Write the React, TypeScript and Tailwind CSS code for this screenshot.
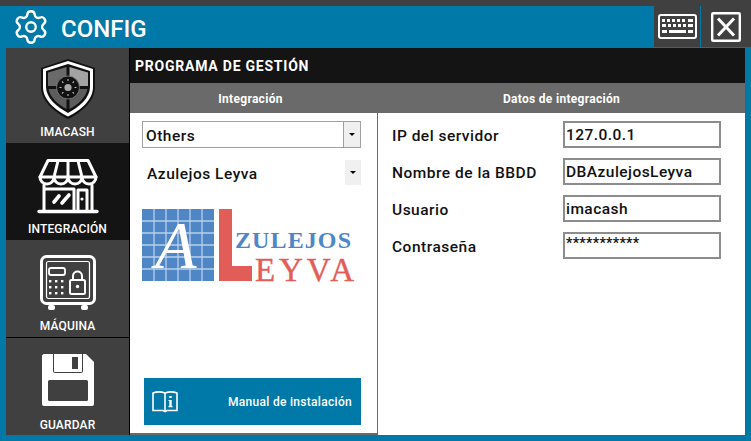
import { Settings } from "lucide-react";
import type { ReactNode } from "react";

const FONT = "font-['Roboto','Noto_Sans',sans-serif]";

function ShieldIcon() {
  return (
    <svg width="56" height="60" viewBox="0 0 56 60">
      <path d="M28 0 L55 9 L55 28 C55 42 42 53 28 60 C14 53 1 42 1 28 L1 9 Z" fill="#111" />
      <path d="M28 2 L53 10 L53 28 C53 41 41 51 28 57.5 C15 51 3 41 3 28 L3 10 Z" fill="#fff" />
      <path d="M28 5 L50 12 L50 28 C50 39 39 48 28 54 C17 48 6 39 6 28 L6 12 Z" fill="#111" />
      <path d="M26.5 8 L26.5 27 L8 27 L8 13.5 Z" fill="#6a6a6a" />
      <path d="M29.5 8 L48 13.5 L48 27 L29.5 27 Z" fill="#a3a3a3" />
      <path d="M8.5 30 L26.5 30 L26.5 50 C18 46 10 38 8.5 30 Z" fill="#5c5c5c" />
      <path d="M29.5 30 L47.5 30 C46 38 38 46 29.5 50 Z" fill="#5c5c5c" />
      <circle cx="28" cy="28.5" r="11.5" fill="#111" stroke="#8a8a8a" strokeWidth="0.8" />
      <circle cx="28" cy="28.5" r="3.6" fill="#a8a8a8" />
      <g stroke="#bbb" strokeWidth="1.1">
        <path d="M28 20v2M28 35v2M19.5 28.5h2M34.5 28.5h2M22 22.5l1.4 1.4M32.6 33.1l1.4 1.4M34 22.5l-1.4 1.4M23.4 33.1L22 34.5" />
      </g>
    </svg>
  );
}

function StoreIcon() {
  return (
    <svg width="62" height="56" viewBox="0 0 62 56" fill="none" stroke="#fff" strokeWidth="3" strokeLinejoin="round" strokeLinecap="round">
      <path d="M11 2.5 H51 L59 19 C59 23 56 26 52 26 C48 26 45 23 45 19 C45 23 42 26 38 26 C34 26 31 23 31 19 C31 23 28 26 24 26 C20 26 17 23 17 19 C17 23 14 26 10 26 C6 26 3 23 3 19 Z" />
      <path d="M3 19 H59 M21 3 L17 19 M31 3 V19 M41 3 L45 19" />
      <path d="M7 27 V52 M55 27 V52" />
      <path d="M2 53.5 H60" strokeWidth="3.4" />
      <path d="M41 32 H50 V52 M41 32 V52" />
      <path d="M17 44 L22 38 M25 45 L32 37" strokeWidth="3.6" />
      <circle cx="45" cy="41" r="1.6" fill="#fff" stroke="none" />
      <path d="M8 31 H37 V52" />
    </svg>
  );
}

function SafeIcon() {
  return (
    <svg width="56" height="56" viewBox="0 0 56 56" fill="none" stroke="#fff">
      <rect x="1.5" y="1.5" width="53" height="47" rx="5" strokeWidth="3" />
      <rect x="6.5" y="6.5" width="43" height="37" rx="2" strokeWidth="1.2" />
      <rect x="9" y="13" width="16" height="7" rx="2" strokeWidth="1.8" />
      <g fill="#fff" stroke="none">
        <rect x="9" y="25" width="2.4" height="2.4" />
        <rect x="15" y="25" width="2.4" height="2.4" />
        <rect x="21" y="25" width="2.4" height="2.4" />
        <rect x="9" y="31" width="2.4" height="2.4" />
        <rect x="15" y="31" width="2.4" height="2.4" />
        <rect x="21" y="31" width="2.4" height="2.4" />
        <rect x="9" y="37" width="2.4" height="2.4" />
        <rect x="15" y="37" width="2.4" height="2.4" />
        <rect x="21" y="37" width="2.4" height="2.4" />
        <rect x="8" y="50" width="7" height="5" rx="2" />
        <rect x="41" y="50" width="7" height="5" rx="2" />
      </g>
      <rect x="30" y="25" width="15" height="14" rx="1.5" strokeWidth="2" />
      <path d="M33 25 V21 C33 15 42 15 42 21 V25" strokeWidth="2" />
      <circle cx="37.5" cy="31.5" r="1.7" fill="#fff" stroke="none" />
    </svg>
  );
}

function FloppyIcon() {
  return (
    <svg width="52" height="52" viewBox="0 0 52 52">
      <path d="M2 0 H44 L52 8 V50 C52 51 51 52 50 52 H2 C1 52 0 51 0 50 V2 C0 1 1 0 2 0 Z" fill="#fff" />
      <path d="M11 0 H41 V17 C41 18 40 19 39 19 H13 C12 19 11 18 11 17 Z" fill="#404040" />
      <path d="M12 0 H40 V17 C40 17.5 39.5 18 39 18 H13 C12.5 18 12 17.5 12 17 Z" fill="#fff" />
      <rect x="30" y="3" width="6" height="12" fill="#404040" />
      <rect x="6" y="26" width="40" height="21" rx="1.5" fill="#404040" />
    </svg>
  );
}

function KeyboardIcon() {
  return (
    <svg width="39" height="25" viewBox="0 0 39 25">
      <rect x="1" y="1" width="37" height="23" rx="2" fill="#404040" stroke="#fff" strokeWidth="2" />
      <g fill="#fff">
        <rect x="4" y="5" width="3" height="3" /><rect x="9" y="5" width="3" height="3" /><rect x="14" y="5" width="3" height="3" />
        <rect x="19" y="5" width="3" height="3" /><rect x="24" y="5" width="3" height="3" /><rect x="30" y="5" width="5" height="3" />
        <rect x="4" y="10" width="4" height="3" /><rect x="10" y="10" width="3" height="3" /><rect x="15" y="10" width="3" height="3" />
        <rect x="20" y="10" width="3" height="3" /><rect x="25" y="10" width="3" height="3" /><rect x="30" y="10" width="5" height="3" />
        <rect x="4" y="16" width="5" height="3" /><rect x="11" y="16" width="17" height="3" /><rect x="30" y="16" width="5" height="3" />
      </g>
    </svg>
  );
}

function CloseIcon() {
  return (
    <svg width="30" height="30" viewBox="0 0 30 30">
      <rect x="1.2" y="1.2" width="27.6" height="27.6" rx="1" fill="none" stroke="#fff" strokeWidth="2.4" />
      <path d="M7 6.5 L23 23.5 M23 6.5 L7 23.5" stroke="#fff" strokeWidth="3" />
    </svg>
  );
}

function BookIcon() {
  return (
    <svg width="26" height="22" viewBox="0 0 26 22" fill="none" stroke="#fff" strokeWidth="1.6">
      <path d="M1 2 C5 0.5 9 0.5 13 2 C17 0.5 21 0.5 25 2 V19.5 H15 L13 20.5 L11 19.5 H1 Z" />
      <path d="M13 2 V20" />
      <path d="M18.5 5 V7 M18.5 9 V16" strokeWidth="2.4" />
      <path d="M16.5 9.5 H18.5 M16.5 15.7 H20.5" strokeWidth="1.2" />
    </svg>
  );
}

function LeyvaLogo() {
  // tiled square with the A, big L and the two wordmarks
  const lines = [12, 24, 36, 48, 60];
  return (
    <svg width="216" height="90" viewBox="0 -6 216 90">
      <rect x="0" y="0" width="72" height="72" fill="#4f86c6" />
      {lines.map((y) => <path key={y} d={`M0 ${y}H72`} stroke="#b9d0ea" strokeWidth="1.3" />)}
      {lines.map((x) => <path key={x} d={`M${x} 0V72`} stroke="#b9d0ea" strokeWidth="1.3" />)}
      <text x="13" y="59" fontFamily="Liberation Serif" fontStyle="italic" fontSize="68" fill="#fff">A</text>
      <path d="M77 0 H90 V57 H110 V72 H77 Z" fill="#e25c58" />
      <text x="93" y="39" fontFamily="Liberation Serif" fontWeight="bold" fontSize="24" textLength="116" fill="#4f86c6">ZULEJOS</text>
      <text x="113" y="72" fontFamily="Liberation Serif" fontSize="33" textLength="99" fill="#e25c58" stroke="#e25c58" strokeWidth="0.4">EYVA</text>
    </svg>
  );
}

function NavItem({ icon, label, active, className }: { icon: ReactNode; label: string; active?: boolean; className: string }) {
  return (
    <div className={`flex flex-col items-center justify-between ${active ? "bg-[#141414]" : "bg-[#404040]"} ${className}`}>
      {icon}
      <span className="text-[12px] font-medium leading-[14px] tracking-[0.15px] text-white">{label}</span>
    </div>
  );
}

function Arrow() {
  return <span className="h-0 w-0 border-x-[3px] border-t-[3px] border-x-transparent border-t-black" />;
}

function Field({ label, value, star }: { label: string; value: string; star?: boolean }) {
  return (
    <div className="flex h-[27px] items-center">
      <span className="w-[171px] pt-[4px] text-[15.5px] font-medium tracking-[0.5px] text-[#111]">{label}</span>
      <div className={`flex h-[27px] w-[158px] items-start border-2 border-[#8c8c8c] pl-[1px] font-medium text-[#111] ${star ? "text-[14.5px] leading-[19px] tracking-[0.25px]" : "text-[15.5px] leading-[24px] tracking-[0.45px]"}`}>
        {value}
      </div>
    </div>
  );
}

export default function App() {
  return (
    <div className={`flex h-[441px] w-[751px] flex-col overflow-hidden bg-[#0078a8] ${FONT}`}>
      <div className="h-[6px] shrink-0 bg-[#404040]" />
      <header className="flex h-[42px] shrink-0 items-center">
        <Settings className="ml-[12px] text-white" size={38} strokeWidth={1.5} />
        <span className="ml-[11px] flex-1 pt-[3px] text-[24px] font-medium leading-none text-white">CONFIG</span>
        <div className="flex h-[41px] items-center self-start bg-[#404040]">
          <div className="flex h-full w-[47px] items-center justify-center border-r border-[#0078a8]"><KeyboardIcon /></div>
          <div className="flex h-full w-[50px] items-center justify-center"><CloseIcon /></div>
        </div>
      </header>
      <div className="flex h-[387px] shrink-0 pl-[6px] pr-[6px]">
        <nav className="flex w-[124px] shrink-0 flex-col border-r border-black">
          <NavItem icon={<ShieldIcon />} label="IMACASH" className="h-[95px] pb-[4px] pt-[11px]" />
          <NavItem icon={<StoreIcon />} label="INTEGRACIÓN" active className="h-[97px] pb-[4px] pt-[15px]" />
          <NavItem icon={<SafeIcon />} label="MÁQUINA" className="h-[97px] pb-[4px] pt-[15px]" />
          <NavItem icon={<FloppyIcon />} label="GUARDAR" className="h-[98px] border-t border-black pb-[3px] pt-[16px]" />
        </nav>
        <main className="flex flex-1 flex-col bg-white">
          <div className="flex h-[35px] shrink-0 items-center bg-[#141414] pl-[5px] pt-[2px] text-[14px] font-bold tracking-[0.77px] text-white">
            PROGRAMA DE GESTIÓN
          </div>
          <div className="flex flex-1">
            <section className="flex w-[248px] shrink-0 flex-col border-b-2 border-r border-[#6a6a6a]">
              <div className="flex h-[30px] shrink-0 items-center justify-center bg-[#6a6a6a] pr-[6px] pt-[2px] text-[12px] font-bold tracking-[0.3px] text-white">Integración</div>
              <div className="ml-[12px] mt-[8px] flex h-[27px] w-[219px] items-center border-[1.5px] border-[#a0a0a0]">
                <span className="flex-1 pl-[3px] pt-[4px] text-[15.5px] font-medium tracking-[0.5px] text-[#111]">Others</span>
                <span className="flex h-full w-[17px] items-center justify-center border-l border-[#a0a0a0] bg-[#f0f0f0]"><Arrow /></span>
              </div>
              <div className="ml-[12px] mt-[12px] flex h-[25px] w-[219px] items-center">
                <span className="flex-1 pl-[5px] pt-[4px] text-[15.5px] font-medium tracking-[0.5px] text-[#111]">Azulejos Leyva</span>
                <span className="flex h-full w-[16px] items-center justify-center bg-[#f0f0f0]"><Arrow /></span>
              </div>
              <div className="ml-[12px] mt-[18px]"><LeyvaLogo /></div>
              <div className="ml-[14px] mt-auto mb-[8px] flex h-[47px] w-[217px] items-center bg-[#0078a8] pl-[8px] pr-[9px] text-white">
                <BookIcon />
                <span className="ml-auto text-[12px] font-medium tracking-[0.3px]">Manual de instalación</span>
              </div>
            </section>
            <section className="flex flex-1 flex-col">
              <div className="flex h-[30px] shrink-0 items-center justify-center bg-[#6a6a6a] pt-[2px] text-[12px] font-bold tracking-[0.3px] text-white">Datos de integración</div>
              <div className="flex flex-col gap-[10px] pl-[14px] pt-[8px]">
                <Field label="IP del servidor" value="127.0.0.1" />
                <Field label="Nombre de la BBDD" value="DBAzulejosLeyva" />
                <Field label="Usuario" value="imacash" />
                <Field label="Contraseña" value="***********" star />
              </div>
            </section>
          </div>
        </main>
      </div>
    </div>
  );
}
